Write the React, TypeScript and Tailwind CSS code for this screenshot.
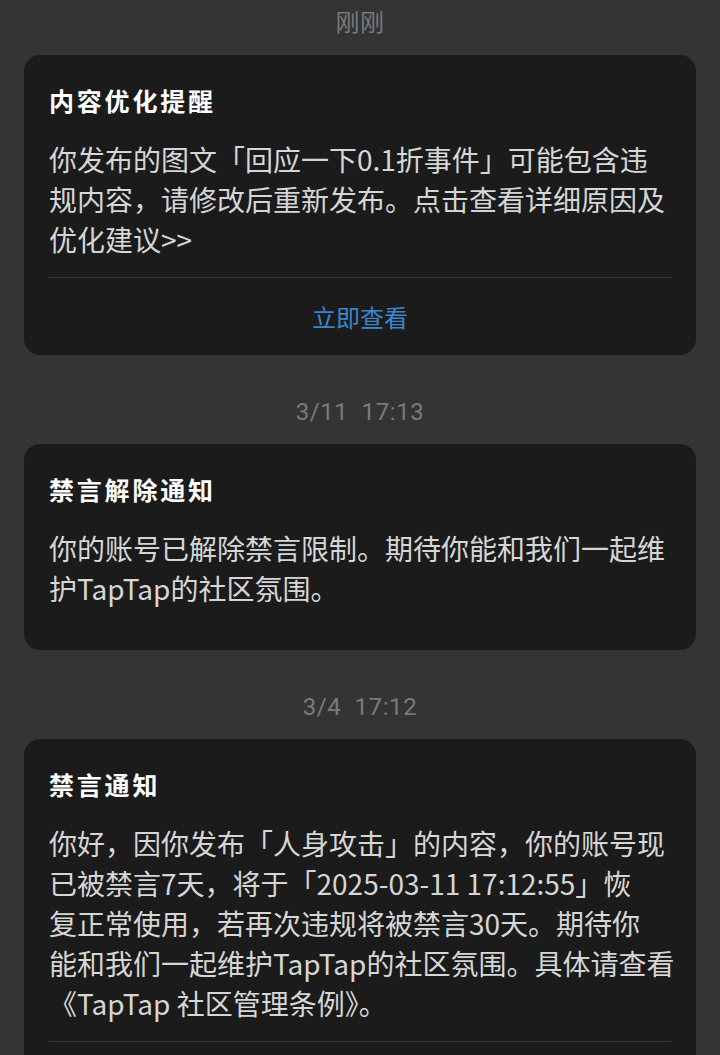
import React from "react";

const font = { fontFamily: '"Noto Sans CJK SC", "Noto Sans", sans-serif' };

function Stamp({ text, first }: { text: string; first?: boolean }) {
  return (
    <div
      className={`${first ? "mt-[8px]" : "mt-[42px]"} mb-[17px] flex h-[30px] items-center justify-center whitespace-pre text-[24px] leading-[30px] tracking-[0.6px] text-[#7a7a7a]`}
      style={{ fontFamily: 'Roboto, "Noto Sans CJK SC", sans-serif' }}
    >
      {text}
    </div>
  );
}

function Card({
  title,
  lines,
  button,
}: {
  title: string;
  lines: string[];
  button?: boolean;
}) {
  return (
    <div className="mx-[24px] rounded-[16px] bg-[#1b1b1b] px-[25px] pt-[27px]">
      <div className="text-[25px] font-bold leading-[36px] tracking-[2.8px] text-white">
        {title}
      </div>
      <div
        className={`mt-[21px] text-[28px] leading-[40px] text-[#d6d6d6] ${
          button ? "" : "pb-[42px]"
        }`}
      >
        {lines.map((l, i) => (
          <div key={i} className="whitespace-nowrap">
            {l}
          </div>
        ))}
      </div>
      {button && (
        <>
          <div className="mt-[18px] h-px bg-[#343434]" />
          <div className="flex h-[77px] items-center justify-center text-[24px] text-[#3a87cc]">
            立即查看
          </div>
        </>
      )}
    </div>
  );
}

export default function App() {
  return (
    <div className="min-h-screen overflow-hidden bg-[#343434] pb-10" style={font}>
      <Stamp text="刚刚" first />
      <Card
        title="内容优化提醒"
        lines={[
          "你发布的图文「回应一下0.1折事件」可能包含违",
          "规内容，请修改后重新发布。点击查看详细原因及",
          "优化建议>>",
        ]}
        button
      />
      <Stamp text="3/11  17:13" />
      <Card
        title="禁言解除通知"
        lines={[
          "你的账号已解除禁言限制。期待你能和我们一起维",
          "护TapTap的社区氛围。",
        ]}
      />
      <Stamp text="3/4  17:12" />
      <Card
        title="禁言通知"
        lines={[
          "你好，因你发布「人身攻击」的内容，你的账号现",
          "已被禁言7天，将于「2025-03-11 17:12:55」恢",
          "复正常使用，若再次违规将被禁言30天。期待你",
          "能和我们一起维护TapTap的社区氛围。具体请查看",
          "《TapTap 社区管理条例》。",
        ]}
        button
      />
    </div>
  );
}
